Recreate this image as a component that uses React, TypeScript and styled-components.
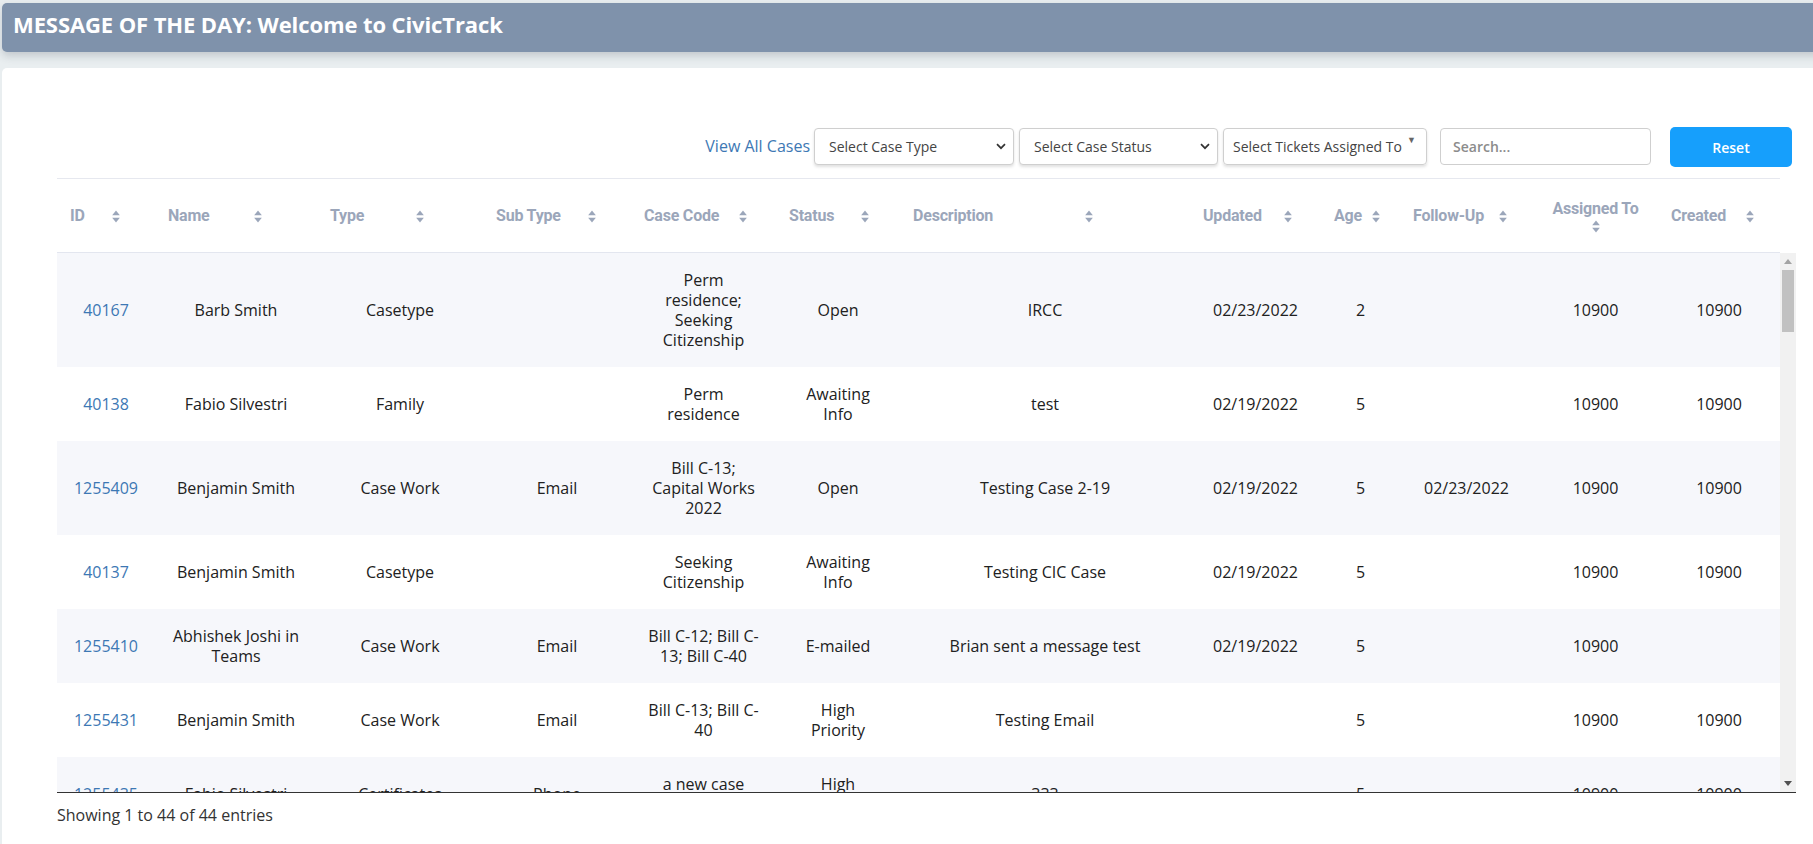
import React from 'react';
import styled, { createGlobalStyle } from 'styled-components';

const GlobalStyle = createGlobalStyle`
  html, body {
    margin: 0;
    padding: 0;
    overflow: hidden;
    background: #e9eef0;
    font-family: 'Open Sans', 'Liberation Sans', sans-serif;
  }
  * { box-sizing: border-box; }
`;

const COLS = '98px 162px 166px 148px 145px 124px 290px 131px 79px 133px 125px 122px';

const Page = styled.div`
  padding: 3px 0 0 2px;
  height: 100vh;
`;

const MessageBar = styled.div`
  height: 49px;
  margin-right: -10px;
  padding: 5px 11px 0;
  background: #7f92ab;
  border-radius: 5px;
  box-shadow: 0 4px 9px rgba(60, 70, 80, 0.22);
  color: #fff;
  font-weight: 700;
  font-size: 22px;
  line-height: 32px;
  letter-spacing: -0.1px;
`;

const Panel = styled.div`
  margin-top: 16px;
  height: calc(100vh - 68px);
  background: #fff;
  border-radius: 5px 0 0 0;
  padding: 59px 17px 0 55px;
`;

const FilterRow = styled.div`
  display: flex;
  justify-content: flex-end;
  align-items: center;
  height: 40px;
  padding-right: 4px;
`;

const ViewAll = styled.a`
  color: #3d78b4;
  font-size: 16px;
  text-decoration: none;
  margin-right: 4px;
  margin-top: -3px;
`;

const SelectWrap = styled.div<{ $w: number; $ml?: number }>`
  position: relative;
  width: ${(p) => p.$w}px;
  height: 37px;
  margin-left: ${(p) => p.$ml ?? 0}px;
  margin-top: -2px;
`;

const Select = styled.select`
  appearance: none;
  width: 100%;
  height: 100%;
  border: 1px solid #cfcfcf;
  border-radius: 4px;
  background: #fff;
  box-shadow: 0 2px 3px rgba(0, 0, 0, 0.12);
  padding: 0 0 0 14px;
  font-family: 'Open Sans', 'Liberation Sans', sans-serif;
  font-size: 14px;
  color: #444;
`;

const Chevron = styled.svg`
  position: absolute;
  right: 8px;
  top: 15px;
  pointer-events: none;
`;

const MultiBox = styled.div`
  width: 204px;
  height: 37px;
  margin-left: 5px;
  margin-top: -2px;
  border: 1px solid #cfcfcf;
  border-radius: 4px;
  box-shadow: 0 2px 3px rgba(0, 0, 0, 0.12);
  display: flex;
  align-items: center;
  padding-left: 9px;
  font-size: 14px;
  color: #444;
  position: relative;
  white-space: nowrap;
`;

const Caret = styled.span`
  position: absolute;
  right: 10px;
  top: 4px;
  font-size: 9px;
  color: #666;
`;

const Search = styled.input`
  width: 211px;
  height: 37px;
  margin-left: 13px;
  margin-top: -2px;
  border: 1px solid #cfcfcf;
  border-radius: 4px;
  padding: 0 12px;
  font-family: 'Open Sans', 'Liberation Sans', sans-serif;
  font-size: 14px;
  &::placeholder {
    color: #8c8c8c;
    font-weight: 600;
  }
`;

const ResetButton = styled.button`
  width: 122px;
  height: 40px;
  margin-left: 19px;
  border: none;
  border-radius: 5px;
  background: #169ffc;
  color: #fff;
  font-family: 'Open Sans', 'Liberation Sans', sans-serif;
  font-weight: 600;
  font-size: 14px;
`;

const HeadRow = styled.div`
  display: grid;
  grid-template-columns: ${COLS};
  width: 1723px;
  height: 75px;
  margin-top: 11px;
  border-top: 1px solid #e6e8ef;
  border-bottom: 1px solid #e3e6ef;
`;

const HeadCell = styled.div<{ $center?: boolean }>`
  position: relative;
  display: flex;
  flex-direction: ${(p) => (p.$center ? 'column' : 'row')};
  align-items: center;
  justify-content: ${(p) => (p.$center ? 'center' : 'flex-start')};
  padding-left: ${(p) => (p.$center ? 0 : 13)}px;
  font-family: Roboto, 'Liberation Sans', sans-serif;
  font-weight: 700;
  font-size: 16px;
  line-height: 19px;
  letter-spacing: -0.2px;
  color: #9ba6ba;
  white-space: nowrap;
`;

const SortIcon = styled.svg<{ $x?: number }>`
  ${(p) =>
    p.$x !== undefined
      ? `position: absolute; left: ${p.$x}px; top: 50%; margin-top: -6px;`
      : 'margin-top: 2px;'}
`;

const BodyArea = styled.div`
  display: flex;
  width: 1739px;
  height: 540px;
  border-bottom: 1px solid #333;
`;

const Rows = styled.div`
  width: 1723px;
  height: 539px;
  overflow: hidden;
`;

const ScrollTrack = styled.div`
  width: 16px;
  display: flex;
  flex-direction: column;
  align-items: center;
  background: #f1f1f1;
`;

const ScrollArrow = styled.div`
  height: 17px;
  width: 100%;
  display: flex;
  align-items: center;
  justify-content: center;
`;

const ScrollThumb = styled.div`
  width: 12px;
  height: 62px;
  background: #c1c1c1;
`;

const ScrollSpace = styled.div`
  flex: 1;
`;

const BodyRow = styled.div<{ $odd: boolean }>`
  display: grid;
  grid-template-columns: ${COLS};
  width: 1723px;
  background: ${(p) => (p.$odd ? '#f6f7fb' : '#fff')};
`;

const Cell = styled.div<{ $link?: boolean }>`
  display: flex;
  flex-direction: column;
  justify-content: center;
  align-items: center;
  text-align: center;
  padding: 17px 6px;
  font-size: 16px;
  line-height: 20px;
  color: ${(p) => (p.$link ? '#3d78b4' : '#212121')};
  white-space: nowrap;
`;

const Footer = styled.div`
  margin-top: 11px;
  font-size: 16px;
  line-height: 22px;
  color: #333;
`;

type Col = { label: string; iconX?: number; center?: boolean };

const columns: Col[] = [
  { label: 'ID', iconX: 55 },
  { label: 'Name', iconX: 99 },
  { label: 'Type', iconX: 99 },
  { label: 'Sub Type', iconX: 105 },
  { label: 'Case Code', iconX: 108 },
  { label: 'Status', iconX: 85 },
  { label: 'Description', iconX: 185 },
  { label: 'Updated', iconX: 94 },
  { label: 'Age', iconX: 51 },
  { label: 'Follow-Up', iconX: 99 },
  { label: 'Assigned To', center: true },
  { label: 'Created', iconX: 88 },
];

type Row = string[][];

const r = (...cells: (string | string[])[]): Row => cells.map((c) => (Array.isArray(c) ? c : [c]));

// first page of the case list (44 entries, the body is scrolled to the top)
const firstRows: Row[] = [
  r('40167', 'Barb Smith', 'Casetype', '', ['Perm', 'residence;', 'Seeking', 'Citizenship'], 'Open', 'IRCC', '02/23/2022', '2', '', '10900', '10900'),
  r('40138', 'Fabio Silvestri', 'Family', '', ['Perm', 'residence'], ['Awaiting', 'Info'], 'test', '02/19/2022', '5', '', '10900', '10900'),
  r('1255409', 'Benjamin Smith', 'Case Work', 'Email', ['Bill C-13;', 'Capital Works', '2022'], 'Open', 'Testing Case 2-19', '02/19/2022', '5', '02/23/2022', '10900', '10900'),
  r('40137', 'Benjamin Smith', 'Casetype', '', ['Seeking', 'Citizenship'], ['Awaiting', 'Info'], 'Testing CIC Case', '02/19/2022', '5', '', '10900', '10900'),
  r('1255410', ['Abhishek Joshi in', 'Teams'], 'Case Work', 'Email', ['Bill C-12; Bill C-', '13; Bill C-40'], 'E-mailed', 'Brian sent a message test', '02/19/2022', '5', '', '10900', ''),
  r('1255431', 'Benjamin Smith', 'Case Work', 'Email', ['Bill C-13; Bill C-', '40'], ['High', 'Priority'], 'Testing Email', '', '5', '', '10900', '10900'),
  r('1255435', 'Fabio Silvestri', 'Certificates', 'Phone', ['a new case', 'code'], ['High', 'Priority'], '333', '', '5', '', '10900', '10900'),
];

const names = ['Benjamin Smith', 'Fabio Silvestri', 'Barb Smith', 'Brian Lee'];
const restRows: Row[] = Array.from({ length: 37 }, (_, i) =>
  r(
    String(1255440 + i * 3),
    names[i % names.length],
    i % 2 ? 'Case Work' : 'Casetype',
    i % 2 ? 'Email' : 'Phone',
    i % 2 ? ['Bill C-13;', 'Capital Works', '2022'] : ['Perm', 'residence;', 'Seeking', 'Citizenship'],
    i % 3 ? 'Open' : ['Awaiting', 'Info'],
    'Testing Case ' + (i + 3),
    '02/18/2022',
    String(6 + (i % 4)),
    '',
    '10900',
    '10900'
  )
);

const rows = [...firstRows, ...restRows];

const Sort = ({ x }: { x?: number }) => (
  <SortIcon $x={x} width="8" height="13" viewBox="0 0 8 13">
    <path d="M4 0.5 L7.8 5.3 L0.2 5.3 Z" fill="#9ba6ba" />
    <path d="M4 12.5 L7.8 7.7 L0.2 7.7 Z" fill="#9ba6ba" />
  </SortIcon>
);

const ChevronDown = () => (
  <Chevron width="10" height="7" viewBox="0 0 10 7">
    <path d="M1 1.2 L5 5.2 L9 1.2" fill="none" stroke="#333" strokeWidth="1.7" />
  </Chevron>
);

export default function App() {
  return (
    <>
      <GlobalStyle />
      <Page>
        <MessageBar>MESSAGE OF THE DAY: Welcome to CivicTrack</MessageBar>
        <Panel>
          <FilterRow>
            <ViewAll href="#">View All Cases</ViewAll>
            <SelectWrap $w={200}>
              <Select defaultValue="">
                <option value="">Select Case Type</option>
              </Select>
              <ChevronDown />
            </SelectWrap>
            <SelectWrap $w={199} $ml={5}>
              <Select defaultValue="">
                <option value="">Select Case Status</option>
              </Select>
              <ChevronDown />
            </SelectWrap>
            <MultiBox>
              Select Tickets Assigned To
              <Caret>▼</Caret>
            </MultiBox>
            <Search placeholder="Search..." />
            <ResetButton>Reset</ResetButton>
          </FilterRow>

          <HeadRow>
            {columns.map((c) =>
              c.center ? (
                <HeadCell key={c.label} $center>
                  {c.label}
                  <Sort />
                </HeadCell>
              ) : (
                <HeadCell key={c.label}>
                  {c.label}
                  <Sort x={c.iconX} />
                </HeadCell>
              )
            )}
          </HeadRow>

          <BodyArea>
            <Rows>
              {rows.map((row, i) => (
                <BodyRow key={i} $odd={i % 2 === 0}>
                  {row.map((lines, j) => (
                    <Cell key={j} $link={j === 0}>
                      {lines.map((l, k) => (
                        <span key={k}>{l}</span>
                      ))}
                    </Cell>
                  ))}
                </BodyRow>
              ))}
            </Rows>
            <ScrollTrack>
              <ScrollArrow>
                <svg width="8" height="5" viewBox="0 0 8 5">
                  <path d="M4 0 L8 5 L0 5 Z" fill="#a3a3a3" />
                </svg>
              </ScrollArrow>
              <ScrollThumb />
              <ScrollSpace />
              <ScrollArrow>
                <svg width="8" height="5" viewBox="0 0 8 5">
                  <path d="M0 0 L8 0 L4 5 Z" fill="#505050" />
                </svg>
              </ScrollArrow>
            </ScrollTrack>
          </BodyArea>

          <Footer>Showing 1 to 44 of 44 entries</Footer>
        </Panel>
      </Page>
    </>
  );
}
